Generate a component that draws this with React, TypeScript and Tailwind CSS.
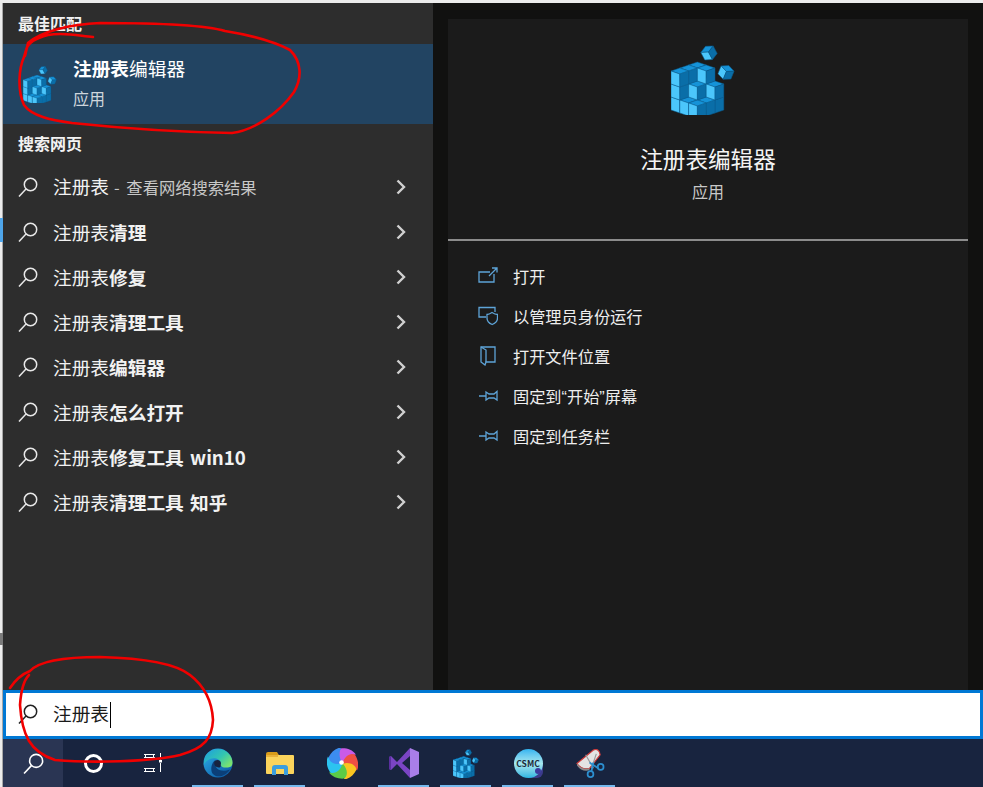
const cjk = "font-['Noto_Sans_CJK_SC','Noto_Sans',sans-serif]";

const Cube = ({ cx, y, hw = 8.8, d = 3, h = 13, rot }: { cx: number; y: number; hw?: number; d?: number; h?: number; rot?: number }) => (
  <g transform={rot ? `rotate(${rot} ${cx} ${y + d + h / 2})` : undefined} stroke="#0a5a8c" strokeWidth="0.5" strokeLinejoin="round">
    <polygon points={`${cx},${y} ${cx + hw},${y + d} ${cx},${y + 2 * d} ${cx - hw},${y + d}`} fill="#1593d8" />
    <polygon points={`${cx - hw},${y + d} ${cx},${y + 2 * d} ${cx},${y + 2 * d + h} ${cx - hw},${y + d + h}`} fill="#4bc6fb" />
    <polygon points={`${cx + hw},${y + d} ${cx},${y + 2 * d} ${cx},${y + 2 * d + h} ${cx + hw},${y + d + h}`} fill="#0a6ea8" />
  </g>
);

// i, j = position in the block, k = layer, painted back to front
const blocks = [
  [0, 0, 0], [0, 1, 0], [1, 0, 0], [0, 2, 0], [1, 1, 0], [2, 0, 0], [1, 2, 0], [2, 1, 0], [2, 2, 0],
  [0, 0, 1], [0, 1, 1], [1, 0, 1], [0, 2, 1], [1, 1, 1], [2, 0, 1],
  [0, 0, 2], [0, 1, 2], [1, 0, 2], [0, 2, 2],
];

const RegistryIcon = ({ className }: { className: string }) => (
  <svg viewBox="0 0 64 70" className={className}>
    {blocks.map(([i, j, k]) => (
      <Cube key={`${i}${j}${k}`} cx={26.4 + (i - j) * 8.8} y={17 + (i + j) * 3 + (2 - k) * 13} />
    ))}
    <Cube cx={38} y={0.5} hw={7} d={3.2} h={8.5} rot={-28} />
    <Cube cx={55} y={20} hw={7} d={3.2} h={8.5} rot={22} />
  </svg>
);

const SearchIcon = ({ className, color = '#e8e8e8' }: { className: string; color?: string }) => (
  <svg viewBox="0 0 20 20" fill="none" stroke={color} strokeWidth="1.5" className={className}>
    <circle cx="12.5" cy="7.5" r="6.2" />
    <line x1="8" y1="12" x2="1" y2="19.5" />
  </svg>
);

const Chevron = () => (
  <svg viewBox="0 0 10 16" fill="none" stroke="#d0d0d0" strokeWidth="2.4" className="w-[10px] h-4">
    <path d="M1.5 1.5 L8 8 L1.5 14.5" />
  </svg>
);

const actionStroke = '#5ea4d8';

const OpenIcon = () => (
  <svg viewBox="0 0 20 20" fill="none" stroke={actionStroke} strokeWidth="1.3" className="w-5 h-5">
    <path d="M16 8 V16 H1 V6 H12" />
    <path d="M11 10 L18.5 2.5 M14 2 H19 V6.5" />
  </svg>
);

const ShieldIcon = () => (
  <svg viewBox="0 0 20 20" fill="none" stroke={actionStroke} strokeWidth="1.3" className="w-5 h-5">
    <path d="M8 11 H1 V1.5 H17 V6" />
    <path d="M9 8.5 C11 8.5 12.5 7.5 14 6.5 C15.5 7.5 17.5 8.5 19.5 8.5 V12 C19.5 15 17 17.5 14.2 18.5 C11.5 17.5 9 15 9 12 Z" />
  </svg>
);

const FolderIcon = () => (
  <svg viewBox="0 0 20 20" fill="none" stroke={actionStroke} strokeWidth="1.3" className="w-5 h-5">
    <path d="M3 1 H17 V16 H8 L7 19 L3 16 Z" />
    <path d="M3 1 L8 4 V16" />
  </svg>
);

const PinIcon = () => (
  <svg viewBox="0 0 20 20" fill="none" stroke={actionStroke} strokeWidth="1.3" className="w-5 h-5">
    <path d="M1 10 H8 M8 6 L11 8 H16 L19 5.5 V14 L16 12 H11 L8 14 Z" />
  </svg>
);

const EdgeIcon = () => (
  <svg viewBox="0 0 30 30" className="w-[30px] h-[30px]">
    <defs>
      <linearGradient id="edgeA" x1="0" y1="0" x2="0.8" y2="1">
        <stop offset="0" stopColor="#2fb6ee" />
        <stop offset="1" stopColor="#0c59a4" />
      </linearGradient>
      <linearGradient id="edgeB" x1="0" y1="0" x2="1" y2="0.7">
        <stop offset="0" stopColor="#1b9de2" />
        <stop offset="0.6" stopColor="#33c6b0" />
        <stop offset="1" stopColor="#7be36f" />
      </linearGradient>
    </defs>
    <circle cx="15" cy="15" r="14.5" fill="url(#edgeA)" />
    <path d="M2 9 C6 1 19 -2 26 6 C30.5 11 30.5 18 27 19 C23 20 17 20 18 15.5 C18 11 11 9 7 11 C4 12.5 2 14 0.6 17 Z" fill="url(#edgeB)" />
    <path d="M12.5 16 C12 21 18 25 27 21.5 C23 28 14 31 9.5 25.5 C7 21.5 8.5 14.5 12.5 12 Z" fill="#0b3f78" />
    <path d="M18 15.5 C18 12 14 11 12 13 C10 15.5 12 19.5 15.5 19.5 C19 19.5 17 17.5 18 15.5 Z" fill="#18243f" />
  </svg>
);

const ExplorerIcon = () => (
  <svg viewBox="0 0 28 23" className="w-7 h-[23px]">
    <path d="M0 2 Q0 0 2 0 H11 L13.5 4 H0 Z" fill="#d99c1a" />
    <rect x="0" y="3" width="28" height="19" rx="1" fill="#fbd45c" />
    <rect x="0" y="3" width="12" height="2" fill="#eab33a" />
    <path d="M6 23 V16 Q6 13 9 13 H19 Q22 13 22 16 V23 H18 V17 H10 V23 Z" fill="#3b9ede" />
  </svg>
);

const bladeColors = ['#c95be8', '#f04f44', '#fac520', '#5ccb46', '#2cc3f0', '#3c8df0'];

const PinwheelIcon = () => (
  <svg viewBox="0 0 32 32" className="w-[31px] h-[31px]">
    {bladeColors.map((c, i) => (
      <path
        key={c}
        transform={`rotate(${i * 60 + 5} 16 16)`}
        d="M16 16 C10 11 9 4 13 0.6 C19 -0.4 25 1 29 5.5 C24 6 19 9 16 16 Z"
        fill={c}
      />
    ))}
    <circle cx="15" cy="15" r="2.4" fill="#ffffff" />
  </svg>
);

const VsIcon = () => (
  <svg viewBox="0 0 30 30" className="w-[30px] h-[30px]">
    <path d="M21 0 L30 4 V26 L21 30 Z" fill="#a97ee8" />
    <path d="M21 0 L8 14 L2 8 L0 9 V21 L2 22 L8 16 L21 30 V22 L13 15 L21 8 Z" fill="#7a45c4" />
    <path d="M0 9 L2 8 V22 L0 21 Z" fill="#5a2f9e" />
  </svg>
);

const CsmcIcon = () => (
  <div className="relative w-[29px] h-[29px]">
    <div className="absolute bottom-0 right-0 w-[14px] h-[14px] rounded-br-md bg-[#3b3a8c]" />
    <div className="absolute inset-0 rounded-full bg-gradient-to-b from-[#2fb4f0] via-[#a5e8ee] to-[#28b5e0]" />
    <div className="absolute right-[2px] bottom-[4px] w-[6px] h-[6px] rounded-full bg-[#3b3a9c]" />
    <span className={`absolute inset-0 flex items-center justify-center text-[8.5px] font-bold text-[#1d2b3a] ${cjk}`}>CSMC</span>
  </div>
);

const SnipIcon = () => (
  <svg viewBox="0 0 30 30" className="w-[29px] h-[29px]">
    <path d="M1 15 L18 1 Q24 -1 25 6 L14 20 Q6 22 1 15 Z" fill="#e4e4e4" stroke="#d03a3a" strokeWidth="1.2" />
    <path d="M1 15 Q6 22 14 20 L14 22 Q6 24 1 17 Z" fill="#8c8c8c" />
    <path d="M10 6 L18 20 M21 5 L16 20" stroke="#9a9a9a" strokeWidth="1.2" />
    <g fill="none" stroke="#2c8fd0" strokeWidth="1.8">
      <circle cx="15" cy="26" r="3" />
      <circle cx="25.5" cy="18.5" r="3" />
      <path d="M14 14 L23 20 M16 23 L18 14" />
    </g>
  </svg>
);

const rows = [
  { plain: '注册表', bold: '', tail: '- 查看网络搜索结果' },
  { plain: '注册表', bold: '清理' },
  { plain: '注册表', bold: '修复' },
  { plain: '注册表', bold: '清理工具' },
  { plain: '注册表', bold: '编辑器' },
  { plain: '注册表', bold: '怎么打开' },
  { plain: '注册表', bold: '修复工具 win10' },
  { plain: '注册表', bold: '清理工具 知乎' },
];

const Quote = ({ children }: { children: string }) => (
  <span className="font-['Liberation_Sans',sans-serif]">{children}</span>
);

const actions = [
  { key: 'open', icon: <OpenIcon />, label: <>打开</> },
  { key: 'admin', icon: <ShieldIcon />, label: <>以管理员身份运行</> },
  { key: 'folder', icon: <FolderIcon />, label: <>打开文件位置</> },
  { key: 'start', icon: <PinIcon />, label: <>固定到<Quote>“</Quote>开始<Quote>”</Quote>屏幕</> },
  { key: 'bar', icon: <PinIcon />, label: <>固定到任务栏</> },
];

const TaskItem = ({ children, active, bar, width = 'w-[62px]' }: { children: React.ReactNode; active?: boolean; bar?: boolean; width?: string }) => (
  <div className={`relative ${width} h-full flex items-center justify-center ${active ? 'bg-[#2a3553]' : ''}`}>
    {children}
    {bar && <div className="absolute bottom-0 left-[5px] right-[6px] h-[2px] bg-[#76b9ed]" />}
  </div>
);

export default function App() {
  return (
    <div className={`relative w-[983px] h-[787px] overflow-hidden bg-[#ececec] pt-[3px] pl-[2px] ${cjk}`}>
      <div className="flex flex-col h-[784px] border-l border-[#a8a8a8]">
        <div className="flex h-[687px]">
          <div className="w-[430px] bg-[#2d2d2d] text-white">
            <div className="h-[41px] pl-[15px] pt-[8px] text-[16px] leading-[24px] font-semibold text-[#f2f2f2]">最佳匹配</div>
            <div className="h-20 bg-[#224462] flex items-center pl-5">
              <RegistryIcon className="w-[34px] h-[37px]" />
              <div className="ml-4 flex flex-col pb-[4px]">
                <div className="text-[18.7px] leading-[26px]">
                  <span className="font-bold">注册表</span>
                  <span className="font-normal">编辑器</span>
                </div>
                <div className="mt-[6px] text-[16px] leading-[22px] text-[#cfd6dc]">应用</div>
              </div>
            </div>
            <div className="h-[41px] pl-[15px] pt-[7px] text-[16px] leading-[24px] font-semibold text-[#f2f2f2]">搜索网页</div>
            {rows.map((row) => (
              <div key={row.plain + row.bold} className="h-[45px] flex items-center pl-[15px] pr-[27px] pb-[2px]">
                <SearchIcon className="w-5 h-5" />
                <div className="ml-[15px] flex-1 text-[18.7px] leading-[26px] text-[#f2f2f2] [word-spacing:2px]">
                  {row.plain}
                  {row.bold && <span className="font-bold">{row.bold}</span>}
                  {row.tail && <span className="ml-[5px] text-[16.3px] text-[#c8c8c8] [word-spacing:3px]">{row.tail}</span>}
                </div>
                <Chevron />
              </div>
            ))}
          </div>
          <div className="flex-1 bg-[#111110] pt-4 px-[15px]">
            <div className="h-[671px] bg-[#1b1b1b] text-white">
              <div className="h-[220px] flex flex-col items-center border-b-2 border-[#8c8c8c] box-content">
                <RegistryIcon className="w-16 h-[70px] mt-[26px] mr-[10px]" />
                <div className="mt-[28px] text-[22.6px] leading-[32px] text-[#f4f4f4]">注册表编辑器</div>
                <div className="mt-[5px] text-[16px] leading-[22px] text-[#c8c8c8]">应用</div>
              </div>
              <div className="pt-[15px] pl-[30px]">
                {actions.map((a) => (
                  <div key={a.key} className="h-10 flex items-center">
                    {a.icon}
                    <span className="ml-[15px] text-[16.2px] leading-[24px] text-[#eeeeee]">{a.label}</span>
                  </div>
                ))}
              </div>
            </div>
          </div>
        </div>
        <div className="h-[49px] bg-white border-[3px] border-[#0078d4] flex items-center pl-[12px]">
          <SearchIcon className="w-5 h-5 mb-[2px]" color="#222222" />
          <span className="ml-[15px] mb-[4px] text-[18.7px] leading-[26px] text-[#1a1a1a]">注册表</span>
          <span className="w-px h-[26px] bg-black ml-[1px]" />
        </div>
        <div className="h-12 bg-[#18243f] flex">
          <TaskItem active width="w-[60px]"><SearchIcon className="w-[21px] h-[21px]" color="#ffffff" /></TaskItem>
          <TaskItem><div className="w-[19px] h-[19px] rounded-full border-[3px] border-white mr-[2px]" /></TaskItem>
          <TaskItem>
            <svg viewBox="0 0 20 20" fill="none" stroke="#ffffff" strokeWidth="1" className="w-5 h-5 mr-[8px]">
              <path d="M2 1.5 H13 M2 4.5 H13 M2 15.5 H13 M2 18.5 H13 M3.5 1 V4.5 M3.5 15.5 V19 M11.5 1 V4.5 M11.5 15.5 V19 M18.5 0 V6.5 M18.5 10 V19" />
              <rect x="17" y="7" width="3" height="2.5" fill="#ffffff" stroke="none" />
            </svg>
          </TaskItem>
          <TaskItem bar><EdgeIcon /></TaskItem>
          <TaskItem bar><ExplorerIcon /></TaskItem>
          <TaskItem><PinwheelIcon /></TaskItem>
          <TaskItem bar><VsIcon /></TaskItem>
          <TaskItem bar><RegistryIcon className="w-[26px] h-[29px]" /></TaskItem>
          <TaskItem bar><CsmcIcon /></TaskItem>
          <TaskItem bar><SnipIcon /></TaskItem>
        </div>
      </div>
      {/* marks on the window edge */}
      <div className="absolute left-0 top-[218px] w-[3px] h-6 bg-[#4ea5ea]" />
      <div className="absolute left-0 top-[633px] w-[3px] h-3 bg-[#7a7a7a]" />
      {/* red pen marks drawn over the screenshot */}
      <svg viewBox="0 0 983 787" fill="none" stroke="#f00000" strokeWidth="2.6" strokeLinecap="round" strokeLinejoin="round" className="absolute inset-0 w-[983px] h-[787px] pointer-events-none">
        <path d="M93 37 C80 36 65 32 48 35 C36 38 28 42 26 50 L24 57 C19 68 17 90 24 105 C32 116 50 120 72 123 C110 127 170 132 232 133 C255 130 280 112 294 92 C302 78 302 62 290 50 C275 42 250 35 225 31 C205 25 150 23 100 23 C70 24 40 32 28 43 L25 56" />
        <path d="M10 688 C18 676 25 673 30 671 C40 660 70 657 100 657 C140 658 175 663 190 675 C203 685 212 700 213 720 C212 738 205 748 180 755 C150 762 90 763 55 760 C30 752 22 735 20 705 C21 690 24 680 29 675" />
      </svg>
    </div>
  );
}
